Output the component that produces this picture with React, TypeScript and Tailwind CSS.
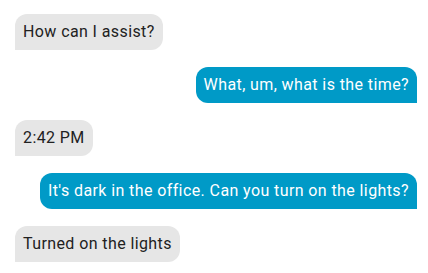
const messages = [
  { who: "hass", text: "How can I assist?" },
  { who: "user", text: "What, um, what is the time?" },
  { who: "hass", text: "2:42 PM" },
  { who: "user", text: "It's dark in the office. Can you turn on the lights?" },
  { who: "hass", text: "Turned on the lights" },
];

export default function App() {
  return (
    <div
      className="flex h-[273px] w-[428px] flex-col gap-[17px] bg-white pl-[15px] pr-[11px] pt-[14px]"
      style={{ fontFamily: "Roboto, sans-serif" }}
    >
      {messages.map((m, i) =>
        m.who === "user" ? (
          <div
            key={i}
            className="self-end rounded-t-[12px] rounded-bl-[12px] bg-[#009ac7] px-2 py-2 text-[16px] leading-5 tracking-[0.4px] text-white"
          >
            {m.text}
          </div>
        ) : (
          <div
            key={i}
            className="self-start rounded-t-[12px] rounded-br-[12px] bg-[#e6e6e6] px-2 py-2 text-[16px] leading-5 tracking-[0.4px] text-[#212121]"
          >
            {m.text}
          </div>
        )
      )}
    </div>
  );
}
